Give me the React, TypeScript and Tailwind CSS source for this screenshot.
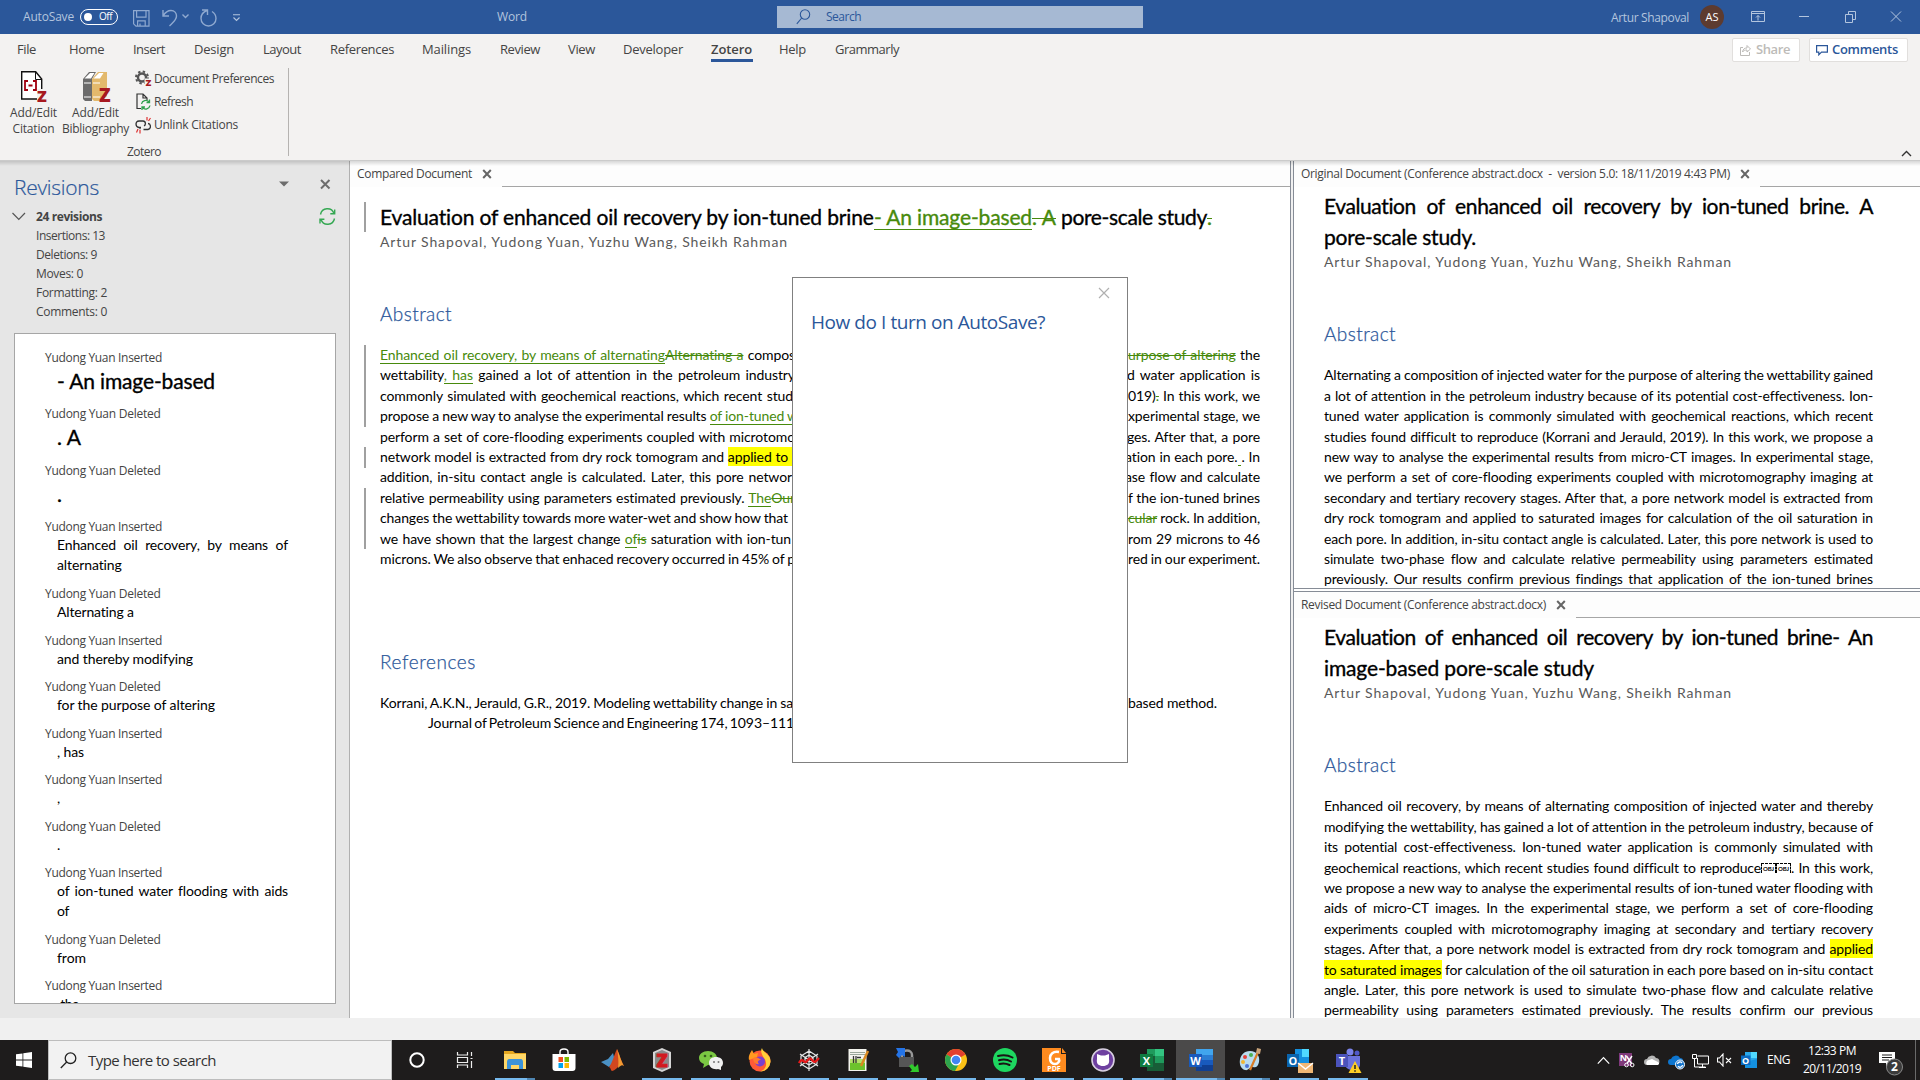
import { useLayoutEffect, useRef } from "react";
import type { ReactNode } from "react";

const UI = "font-['Open_Sans','Noto_Sans',sans-serif]";
const DOC = "font-['Lato','Open_Sans',sans-serif]";
const TITLE = "text-[21px] [-webkit-text-stroke:0.35px_currentColor]";
const HEADING = "text-[19px] font-light leading-[26px] text-[#2b579a] [-webkit-text-stroke:0.25px_currentColor]";

type FitProps = { w: number; mode?: "letter" | "word"; className?: string; children: ReactNode };

/** A single line of text whose letter or word spacing is adjusted to fill `w` pixels. */
function Fit({ w, mode = "letter", className = "", children }: FitProps) {
  const ref = useRef<HTMLSpanElement>(null);
  useLayoutEffect(() => {
    const el = ref.current;
    if (!el) return;
    el.style.letterSpacing = "";
    el.style.wordSpacing = "";
    const text = el.textContent ?? "";
    const spaces = text.split(" ").length - 1;
    const extra = w - el.getBoundingClientRect().width;
    if (mode === "word" && spaces > 0) el.style.wordSpacing = `${extra / spaces}px`;
    else el.style.letterSpacing = `${extra / Math.max(1, text.length)}px`;
  }, [w, mode, children]);
  return (
    <span className={`block shrink-0 ${className}`} style={{ width: w }}>
      <span ref={ref} className="inline-block whitespace-pre">
        {children}
      </span>
    </span>
  );
}

const Ins = ({ children }: { children: ReactNode }) => (
  <span className="border-b border-[#478a0c] pb-0 text-[#478a0c]">{children}</span>
);
const Del = ({ children }: { children: ReactNode }) => (
  <span className="text-[#478a0c] line-through decoration-1">{children}</span>
);
const Mark = ({ children }: { children: ReactNode }) => <span className="bg-[#ffff00] py-px">{children}</span>;

/* ---------- Title bar ---------- */

function TitleBar() {
  return (
    <header className="flex h-[34px] items-center bg-[#2b579a] text-xs text-[#b3c5de]">
      <Fit w={51} className="ml-[23px]">AutoSave</Fit>
      <span className="ml-[6px] flex h-4 w-[38px] items-center rounded-full border-[1.5px] border-white pl-[3px] text-[10px] text-white">
        <i className="mr-[7px] block h-2 w-2 rounded-full bg-white" />
        <Fit w={13}>Off</Fit>
      </span>
      <svg className="ml-[15px] mt-[2px]" width="17" height="17" viewBox="0 0 17 17" fill="none" stroke="#8fa9d0" strokeWidth="1.2">
        <path d="M.6.6h15.400v15.600H3L.6 13.800zM3.600.6v6.600h9.400V.6M4.600 16.200v-5.400h7.600v5.400M7 16v-2.400" />
      </svg>
      <svg className="ml-[12px] mt-[1px]" width="28" height="18" viewBox="0 0 28 18" fill="none" stroke="#8fa9d0" strokeWidth="1.4">
        <path d="M1 1v6h6M1.300 6.700C4 2 7 1.500 9 1.500c3.500 0 5.500 2.500 5.500 5.500 0 4-3.500 6.500-7 10" />
        <path d="M20.500 5.500l3 3 3-3" />
      </svg>
      <svg className="ml-[10px] mt-[1px]" width="18" height="18" viewBox="0 0 18 18" fill="none" stroke="#8fa9d0" strokeWidth="1.4">
        <path d="M2 1h5.500v5M7 1.500C3 3 1 6 1 9.500a7.500 7.500 0 0 0 15 0c0-3-1.500-5.500-4-7" />
      </svg>
      <svg className="ml-[14px] mt-[1px]" width="9" height="8" viewBox="0 0 9 8" fill="none" stroke="#b3c5de" strokeWidth="1.1">
        <path d="M1 .8h7M1.500 3.500l3 3 3-3" />
      </svg>
      <Fit w={30} className="-mt-px ml-[256px]">Word</Fit>
      <div className="ml-[250px] flex h-[22px] w-[366px] items-center bg-[#a6b9d3] text-[#2b579a]">
        <svg className="ml-[19px]" width="15" height="16" viewBox="0 0 15 16" fill="none" stroke="#2b579a" strokeWidth="1.1">
          <circle cx="9" cy="5.500" r="4.700" />
          <path d="M5.700 9L.8 14.800" />
        </svg>
        <Fit w={35} className="ml-[15px]">Search</Fit>
      </div>
      <Fit w={78} className="ml-[468px] mt-px">Artur Shapoval</Fit>
      <span className="ml-[11px] flex h-6 w-6 items-center justify-center rounded-full bg-[#5d3b30] text-[11px] text-white">
        <Fit w={13}>AS</Fit>
      </span>
      <svg className="-mt-px ml-[27px]" width="151" height="12" viewBox="0 0 151 12" fill="none" stroke="#b3c5de">
        <path d="M.5.500h13v10H.5zM.5 2.500h13M7 9.500V4.500M5 6.500l2-2 2 2M48 5.500h10M94.500 3.500h7v8h-7zM97.500 3.500V.5h7v8h-3M140 .5l10 10M150 .5l-10 10" />
      </svg>
    </header>
  );
}

/* ---------- Ribbon ---------- */

// Label, width of the label, and distance from its start to the next label's start.
const TABS: [string, number, number][] = [
  ["File", 19, 52], ["Home", 35, 64], ["Insert", 32, 61], ["Design", 40, 69], ["Layout", 38, 67],
  ["References", 64, 92], ["Mailings", 49, 78], ["Review", 40, 68], ["View", 27, 55], ["Developer", 60, 88],
  ["Zotero", 41, 68], ["Help", 27, 56], ["Grammarly", 64, 64],
];

function TabRow() {
  return (
    <nav className="flex h-8 items-center text-[13px] text-[#444]">
      <div className="ml-[17px] flex">
        {TABS.map(([name, w, pitch]) => (
          <span key={name} className={name === "Zotero" ? "relative font-semibold" : ""} style={{ width: pitch }}>
            <Fit w={w}>{name}</Fit>
            {name === "Zotero" && <i className="absolute -bottom-[2px] left-0 h-[3px] w-[42px] bg-[#2b579a]" />}
          </span>
        ))}
      </div>
      <div className="ml-auto mr-[12px] flex gap-[9px] font-semibold">
        <button className="flex h-[24px] w-[68px] items-center rounded-[2px] border border-[#e1dfdd] bg-white pl-[7px] text-[#bdbbb8]">
          <svg className="mr-[5px]" width="11" height="13" viewBox="0 0 11 13" fill="none" stroke="#bdbbb8">
            <path d="M3 3.500H.5v8h9V8M2.500 8c.5-3 2-4 4.500-4V1.500l3.500 3.500L7 8V6C5 6 3.500 6.500 2.500 8z" />
          </svg>
          <Fit w={34}>Share</Fit>
        </button>
        <button className="flex h-[24px] w-[99px] items-center rounded-[2px] border border-[#e1dfdd] bg-white pl-[6px] text-[#2b579a]">
          <svg className="mr-[4px]" width="12" height="12" viewBox="0 0 12 12" fill="none" stroke="#2b579a" strokeWidth="1.2">
            <path d="M.6 1.600h10.800v6.500H5.500L2.800 10.800V8.100H.6z" />
          </svg>
          <Fit w={66}>Comments</Fit>
        </button>
      </div>
    </nav>
  );
}

const Z = ({ x, y, size }: { x: number; y: number; size: number }) => (
  <text x={x} y={y} fontSize={size} fontWeight="800" fill="#a71920" fontFamily="Open Sans">Z</text>
);

function RibbonBody() {
  return (
    <div className="flex h-[94px] text-xs leading-4 text-[#444]">
      <div className="ml-[10px] flex w-[47px] flex-col items-center pt-[4px]">
        <svg className="overflow-visible" width="25" height="34" viewBox="0 0 25 34">
          <path d="M.7 1.700h14l6 7.300v20H.7z" fill="#fff" stroke="#111" strokeWidth="1.4" />
          <path d="M14.500 2v7.500h6" fill="none" stroke="#111" />
          <path d="M7 11H4v9h3M12 11h3v9h-3M7.500 15.500h4" fill="none" stroke="#a00010" strokeWidth="1.8" />
          <path d="M16 19h9v14h-9z" fill="#f3f2f1" />
          <Z x={16} y={31.5} size={16} />
        </svg>
        <Fit w={47} className="mt-[1px]">Add/Edit</Fit>
        <Fit w={42}>Citation</Fit>
      </div>
      <div className="ml-[5px] flex w-[67px] flex-col items-center pt-[4px]">
        <svg className="overflow-visible" width="28" height="34" viewBox="0 0 28 34">
          <path d="M1 9l6-7h7l-4 7v22H3l-2-2z" fill="#6b6b6b" />
          <path d="M2.500 8.500L8 3h4.500L9 8.500z" fill="#fff" />
          <path d="M10 9l6-7h9v24l-6 5h-7l-2-2z" fill="#e3b96c" />
          <path d="M11.500 8.500L17 3h4.500L18 8.500z" fill="#fff" />
          <path d="M2 13h7M2 27h7M11 13h7M11 27h7" stroke="#fff" />
          <Z x={17} y={31.5} size={19} />
        </svg>
        <Fit w={47} className="mt-[1px]">Add/Edit</Fit>
        <Fit w={67}>Bibliography</Fit>
      </div>
      <div className="ml-[6px] flex flex-col">
        <div className="mt-[1px] flex h-[23px] items-center">
          <svg className="mr-[3px] overflow-visible" width="16" height="17" viewBox="0 0 16 17">
            <circle cx="7" cy="7.500" r="4" fill="none" stroke="#555" strokeWidth="2.4" />
            <circle cx="7" cy="7.500" r="6" fill="none" stroke="#555" strokeWidth="2" strokeDasharray="2.4 2.31" />
            <path d="M9.500 8.500h6.500v8.500H9.500z" fill="#f3f2f1" />
            <Z x={10.5} y={16} size={9.5} />
          </svg>
          <Fit w={120}>Document Preferences</Fit>
        </div>
        <div className="flex h-[23px] items-center">
          <svg className="mr-[3px]" width="16" height="17" viewBox="0 0 16 17" fill="none">
            <path d="M6 15.500H2V1h6l4 4v2M8 1v4h4" stroke="#333" strokeWidth="1.2" />
            <path d="M6.500 11a4.300 4.300 0 0 1 7.500-2M15 12.500a4.300 4.300 0 0 1-7.500 2M14.500 6.500v3h-3M7 17v-3h3" stroke="#2e9f4a" strokeWidth="1.3" />
          </svg>
          <Fit w={39}>Refresh</Fit>
        </div>
        <div className="flex h-[23px] items-center">
          <svg className="mr-[3px]" width="16" height="18" viewBox="0 0 16 18" fill="none">
            <path d="M5.500 12.500H4.500M6 11.500H4C0 11 0 5 4 5h4c3 0 3 4 1 5M8.500 13.500H13c3.500-.5 3-6 0-6" stroke="#333" strokeWidth="1.3" />
            <path d="M12 1v3.500M15.500 2l-2 3M3 13l-1.500 3.500M5 14v3.500" stroke="#d33" strokeWidth="1.2" />
          </svg>
          <Fit w={84}>Unlink Citations</Fit>
        </div>
        <Fit w={34} className="-ml-[8px] mt-[8px]">Zotero</Fit>
      </div>
      <i className="ml-[14px] mt-[2px] h-[88px] w-px bg-[#b5b3b1]" />
      <svg className="mb-[3px] ml-auto mr-[8px] self-end" width="11" height="7" viewBox="0 0 11 7" fill="none" stroke="#333" strokeWidth="1.4">
        <path d="M1 6l4.500-4.500L10 6" />
      </svg>
    </div>
  );
}

/* ---------- Revisions pane ---------- */

type Revision = { kind: "Inserted" | "Deleted"; h: number; lines: [string, number][]; big?: boolean };

const REVISIONS: Revision[] = [
  { kind: "Inserted", h: 56, lines: [["- An image-based", 158]], big: true },
  { kind: "Deleted", h: 57, lines: [[". A", 24]], big: true },
  { kind: "Deleted", h: 56, lines: [[".", 5]], big: true },
  { kind: "Inserted", h: 67, lines: [["Enhanced oil recovery, by means of", 231], ["alternating", 65]] },
  { kind: "Deleted", h: 47, lines: [["Alternating a", 77]] },
  { kind: "Inserted", h: 46, lines: [["and thereby modifying", 136]] },
  { kind: "Deleted", h: 47, lines: [["for the purpose of altering", 158]] },
  { kind: "Inserted", h: 46, lines: [[", has", 27]] },
  { kind: "Inserted", h: 47, lines: [[",", 4]] },
  { kind: "Deleted", h: 46, lines: [[".", 4]] },
  { kind: "Inserted", h: 67, lines: [["of ion-tuned water flooding with aids", 231], ["of", 12]] },
  { kind: "Deleted", h: 46, lines: [["from", 29]] },
  { kind: "Inserted", h: 47, lines: [[" the", 22]] },
];

const COUNTS: [string, number][] = [
  ["Insertions: 13", 69], ["Deletions: 9", 61], ["Moves: 0", 47], ["Formatting: 2", 71], ["Comments: 0", 71],
];

function RevisionsPane() {
  return (
    <aside className="flex w-[350px] shrink-0 flex-col border-r border-[#b0b0b0] bg-[#e6e6e6] text-[#444]">
      <div className="flex h-[42px] items-start pl-[14px] pt-[11px] text-[#2b579a]">
        <Fit w={85} className="text-[21px] font-light leading-[30px] [-webkit-text-stroke:0.2px_currentColor]">Revisions</Fit>
        <svg className="ml-[179px] mt-[7px]" width="54" height="12" viewBox="0 0 54 12">
          <path d="M1 2.500h10L6 7.500z" fill="#6d6d6d" />
          <path d="M43 1l8.500 8.500M51.500 1L43 9.500" stroke="#6d6d6d" strokeWidth="2" />
        </svg>
      </div>
      <div className="flex h-[130px] pl-[12px] pt-[4px]">
        <svg className="mt-[5px]" width="14" height="9" viewBox="0 0 14 9" fill="none" stroke="#555" strokeWidth="1.2">
          <path d="M.5 1l6.300 6.500L13 1" />
        </svg>
        <div className="ml-[10px] w-[284px] text-xs leading-[19px]">
          <Fit w={66} className="font-bold">24 revisions</Fit>
          {COUNTS.map(([t, w]) => (
            <Fit key={t} w={w}>{t}</Fit>
          ))}
        </div>
        <svg className="-ml-px mt-px" width="17" height="17" viewBox="0 0 17 17" fill="none" stroke="#35a853" strokeWidth="1.4">
          <path d="M1.500 6.500A7 7 0 0 1 15 5.500M15.500 10.500A7 7 0 0 1 2 11.500M15.700 1.500v4.300h-4.400M1 15.500v-4.300h4.400" />
        </svg>
      </div>
      <div className="ml-[14px] h-[671px] w-[322px] overflow-hidden border border-[#a6a6a6] bg-white pl-[30px] pt-[14px]">
        {REVISIONS.map((r, i) => (
          <div key={i} style={{ height: r.h }}>
            <Fit w={r.kind === "Inserted" ? 117 : 115.5} className="text-xs leading-5">{`Yudong Yuan ${r.kind}`}</Fit>
            <div className={`ml-[12px] text-black ${DOC} ${r.big ? `${TITLE} -mt-[2px] leading-[29px]` : "-mt-[2px] text-[14px] leading-5"}`}>
              {r.lines.map(([t, w]) => (
                <Fit key={t} w={w} mode={w === 231 ? "word" : "letter"} className={w === 231 ? "tracking-[-0.15px]" : ""}>{t}</Fit>
              ))}
            </div>
          </div>
        ))}
      </div>
    </aside>
  );
}

/* ---------- Document panes ---------- */

function PaneTab({ title, w }: { title: string; w: number }) {
  return (
    <div className="flex h-[26px] shrink-0 bg-[#fdfdfd]">
      <div className="flex w-fit items-center pl-[7px] pr-[10px] text-xs text-[#444]">
        <Fit w={w}>{title}</Fit>
        <svg className="ml-[10px]" width="10" height="10" viewBox="0 0 10 10" stroke="#666" strokeWidth="2">
          <path d="M1.200 1l7.600 8M8.800 1L1.200 9" />
        </svg>
      </div>
      <i className="h-full flex-1 border-b border-[#a6a6a6]" />
    </div>
  );
}

const Authors = () => (
  <Fit w={408} className="text-[14px] text-[#5a5a5a]">Artur Shapoval, Yudong Yuan, Yuzhu Wang, Sheikh Rahman</Fit>
);

const COMPARED: [ReactNode, number, ReactNode, number][] = [
  [<><Ins>Enhanced oil recovery, by means of alternating</Ins><Del>Alternating a</Del> compos</>, 415, <><Del>urpose of altering</Del> the</>, 132],
  [<>wettability<Ins>, has</Ins> gained a lot of attention in the petroleum industry</>, 415, "d water application is", 133],
  ["commonly simulated with geochemical reactions, which recent stud", 413, <>019)<Del>.</Del> In this work, we</>, 132],
  [<>propose a new way to analyse the experimental results <Ins>of ion-tuned w</Ins></>, 418, "xperimental stage, we", 132],
  ["perform a set of core-flooding experiments coupled with microtomo", 415, "ges. After that, a pore", 133],
  [<>network model is extracted from dry rock tomogram and <Mark>applied to </Mark></>, 412, <>ation in each pore.<Ins> </Ins>. In</>, 135],
  ["addition, in-situ contact angle is calculated. Later, this pore networ", 412, "ase flow and calculate", 135],
  [<>relative permeability using parameters estimated previously. <Ins>The</Ins><Del>Our</Del></>, 415, "f the ion-tuned brines", 132],
  ["changes the wettability towards more water-wet and show how that", 408, <><Del>cular</Del> rock. In addition,</>, 132],
  [<>we have shown that the largest change <Ins>of</Ins><Del>is</Del> saturation with ion-tun</>, 411, "rom 29 microns to 46", 132],
  ["microns. We also observe that enhaced recovery occurred in 45% of p", 415, "red in our experiment.", 132],
];

function ComparedPane() {
  return (
    <section className="flex w-[940px] shrink-0 flex-col bg-white">
      <PaneTab title="Compared Document" w={115} />
      <div className={`flex text-black ${DOC}`}>
        <div className="ml-[14px] mr-[14px] flex w-[2px] flex-col pt-[15px]">
          <i className="h-[30px] bg-[#a0a0a0]" />
          <i className="mt-[113px] h-[82px] bg-[#a0a0a0]" />
          <i className="mt-[20px] h-[21px] bg-[#a0a0a0]" />
          <i className="mt-[20px] h-[61px] bg-[#a0a0a0]" />
        </div>
        <div className="w-[880px] pt-[15px]">
          <h1 className={`flex leading-[30px] ${TITLE}`}>
            <Fit w={494}>Evaluation of enhanced oil recovery by ion-tuned brine</Fit>
            <Fit w={158} className="text-[#478a0c]">
              <span className="underline decoration-1 underline-offset-[4px] [text-decoration-skip-ink:none]">- An image-based</span>
            </Fit>
            <Fit w={24}><Del>. A</Del></Fit>
            <Fit w={151}> pore-scale study</Fit>
            <Fit w={5}><Del>.</Del></Fit>
          </h1>
          <div className="leading-[19px]"><Authors /></div>
          <Fit w={72} className={`mt-[50px] ${HEADING}`}>Abstract</Fit>
          <div className="mt-[18px] text-[14px] leading-[20.4px] tracking-[-0.1px]">
            {COMPARED.map(([left, lw, right, rw], i) => (
              <div key={i} className="flex justify-between">
                <Fit w={lw} mode="word">{left}</Fit>
                <Fit w={rw} mode="word">{right}</Fit>
              </div>
            ))}
          </div>
          <Fit w={96} className={`mt-[80px] ${HEADING}`}>References</Fit>
          <div className="mt-[18px] text-[14px] leading-[19.5px] tracking-[-0.1px]">
            <div className="flex">
              <Fit w={413} mode="word">Korrani, A.K.N., Jerauld, G.R., 2019. Modeling wettability change in sa</Fit>
              <Fit w={89} mode="word" className="ml-[335px]">based method.</Fit>
            </div>
            <Fit w={366} mode="word" className="ml-[48px]">Journal of Petroleum Science and Engineering 174, 1093–111</Fit>
          </div>
        </div>
      </div>
    </section>
  );
}

type SideProps = {
  tab: string; tabW: number; title: ReactNode; title2: string; title2W: number; lines: ReactNode[];
};

function SideDoc({ tab, tabW, title, title2, title2W, lines }: SideProps) {
  return (
    <section className="flex min-h-0 flex-1 flex-col overflow-hidden bg-white">
      <PaneTab title={tab} w={tabW} />
      <div className={`ml-[30px] w-[549px] pt-[3px] text-black ${DOC}`}>
        <h1 className={`leading-[31.2px] ${TITLE}`}>
          <Fit w={549} mode="word" className="tracking-[-0.4px]">{title}</Fit>
          <Fit w={title2W}>{title2}</Fit>
        </h1>
        <div className="leading-[19px]"><Authors /></div>
        <Fit w={72} className={`mt-[50px] ${HEADING}`}>Abstract</Fit>
        <div className="mt-[18px] text-[14px] leading-[20.4px] tracking-[-0.15px]">
          {lines.map((l, i) => (
            <Fit key={i} w={549} mode="word">{l}</Fit>
          ))}
        </div>
      </div>
    </section>
  );
}

const Obj = () => (
  <span className="relative -top-[2px] inline-block h-[10px] w-[15px] border-x border-t border-dashed border-black text-center align-baseline text-[6px] font-bold leading-[9px] tracking-[-0.2px]">OBJ</span>
);

const ORIGINAL: ReactNode[] = [
  "Alternating a composition of injected water for the purpose of altering the wettability gained",
  "a lot of attention in the petroleum industry because of its potential cost-effectiveness. Ion-",
  "tuned water application is commonly simulated with geochemical reactions, which recent",
  "studies found difficult to reproduce (Korrani and Jerauld, 2019). In this work, we propose a",
  "new way to analyse the experimental results from micro-CT images. In experimental stage,",
  "we perform a set of core-flooding experiments coupled with microtomography imaging at",
  "secondary and tertiary recovery stages. After that, a pore network model is extracted from",
  "dry rock tomogram and applied to saturated images for calculation of the oil saturation in",
  "each pore. In addition, in-situ contact angle is calculated. Later, this pore network is used to",
  "simulate two-phase flow and calculate relative permeability using parameters estimated",
  "previously. Our results confirm previous findings that application of the ion-tuned brines",
];

const REVISED: ReactNode[] = [
  "Enhanced oil recovery, by means of alternating composition of injected water and thereby",
  "modifying the wettability, has gained a lot of attention in the petroleum industry, because of",
  "its potential cost-effectiveness. Ion-tuned water application is commonly simulated with",
  <>geochemical reactions, which recent studies found difficult to reproduce<Obj /><Obj />. In this work,</>,
  "we propose a new way to analyse the experimental results of ion-tuned water flooding with",
  "aids of micro-CT images. In the experimental stage, we perform a set of core-flooding",
  "experiments coupled with microtomography imaging at secondary and tertiary recovery",
  <>stages. After that, a pore network model is extracted from dry rock tomogram and <Mark>applied</Mark></>,
  <><Mark>to saturated images</Mark> for calculation of the oil saturation in each pore based on in-situ contact</>,
  "angle. Later, this pore network is used to simulate two-phase flow and calculate relative",
  "permeability using parameters estimated previously. The results confirm our previous",
];

function AutoSaveDialog() {
  return (
    <div className="absolute left-[792px] top-[277px] h-[486px] w-[336px] border border-[#808080] bg-white">
      <svg className="ml-auto mr-[17px] mt-[9px]" width="12" height="12" viewBox="0 0 12 12" stroke="#b0b0b0" strokeWidth="1.2">
        <path d="M1 1l10 10M11 1L1 11" />
      </svg>
      <Fit w={234} className="ml-[18px] mt-[9px] text-[19px] leading-[28px] text-[#2b579a]">How do I turn on AutoSave?</Fit>
    </div>
  );
}

/* ---------- Taskbar ---------- */

const Letter = ({ x, y, s = 11, children }: { x: number; y: number; s?: number; children: string }) => (
  <text x={x} y={y} fontSize={s} fontWeight="700" fill="#fff" textAnchor="middle" fontFamily="Open Sans">{children}</text>
);

const APPS: { name: string; run?: "one" | "many" | "active"; art: ReactNode }[] = [
  { name: "Cortana", art: <circle cx="12" cy="12" r="6.700" fill="none" stroke="#fff" strokeWidth="2" /> },
  { name: "Task view", art: <path d="M3.500 4v3h10V4M3.500 20v-3h10v3M3.500 9.500h10v5h-10zM17.500 4v4M17.500 13v7M16.500 10.500h2" fill="none" stroke="#eee" strokeWidth="1.2" /> },
  { name: "File Explorer", run: "many", art: <><path d="M1 3h9l2 2h11v16H1z" fill="#e5a720" /><path d="M1 6h22v15H1z" fill="#ffd767" /><path d="M4 21v-7c0-2 1-3 2-3h12c1 0 2 1 2 3v7h-4v-4H8v4z" fill="#3c93d9" /></> },
  { name: "Store", art: <><path d="M8 6V4c0-4 8-4 8 0v2" fill="none" stroke="#fff" strokeWidth="1.4" /><path d="M.5 6h23v14a3 3 0 0 1-3 3h-17a3 3 0 0 1-3-3z" fill="#fff" /><path d="M6.500 9H11v5H6.500z" fill="#f25022" /><path d="M12.500 9H17v5h-4.500z" fill="#7fba00" /><path d="M6.500 15H11v5H6.500z" fill="#00a4ef" /><path d="M12.500 15H17v5h-4.500z" fill="#ffb900" /></> },
  { name: "MATLAB", art: <><path d="M0 14l7-3 5-6 2 8-6 6z" fill="#4a90c4" /><path d="M8 19c3-3 5-12 8-18 2 4 4 12 7 17-3-3-5 0-7 2s-4 3-5 3-1-3-3-4z" fill="#d1471f" /><path d="M16 1c1 6 2 12 1 19 2-2 4-4 6-2-3-5-5-13-7-17z" fill="#f39a32" /></> },
  { name: "Zotero", run: "one", art: <><path d="M12 0l9 4v16l-9 4-9-4V4z" fill="#d5d5d5" /><path d="M12 2l7 3v14l-7 3-7-3V5z" fill="#8a8a8a" /><text x="12" y="18.500" fontSize="18" fontWeight="800" fill="#d11a1f" stroke="#d11a1f" textAnchor="middle" fontFamily="Open Sans">Z</text></> },
  { name: "WeChat", run: "one", art: <><path d="M9 3c5 0 9 3 9 7s-4 7-9 7l-5 3 1-4c-3-1-5-3-5-6 0-4 4-7 9-7z" fill="#7bc843" /><circle cx="6" cy="8" r="1.300" fill="#345c1c" /><circle cx="12" cy="8" r="1.300" fill="#345c1c" /><path d="M17 9c4 0 7 2 7 6 0 2-1 3-2 4v3l-3-1c-5 1-9-2-9-6s3-6 7-6z" fill="#f1f1f1" /><circle cx="15" cy="14" r="1" fill="#777" /><circle cx="19.500" cy="14" r="1" fill="#777" /></> },
  { name: "Firefox", run: "one", art: <><circle cx="12" cy="13" r="10.500" fill="#ff5a36" /><path d="M14 0c1 5 9 6 8.500 14A10.500 10.500 0 0 1 12 23.500c7-2 8-9 3-15-1-3-3-5-1-8.500z" fill="#ffcf3a" /><path d="M1 12C0 7 3 4 4 2l2 4 4-1-1 4z" fill="#ff9a1f" /><circle cx="12" cy="13.500" r="5" fill="#7a3fd0" /><path d="M5 10c4-1 6 0 8 2-3 0-4 2-2 4-3 1-6-2-6-6z" fill="#ff7a2d" /></> },
  { name: "Spyder", run: "one", art: <><path d="M12 1v22M3 6l18 12M21 6L3 18M12 3L4 8v8l8 5 8-5V8zM12 7L8 9.500v5l4 2.500 4-2.500v-5z" fill="none" stroke="#e6e6e6" strokeWidth="1.2" /><path d="M2 15c3-6 5 0 7-1s3-6 6-2 4 1 7-2" fill="none" stroke="#e61919" strokeWidth="2.4" /></> },
  { name: "Notepad++", run: "one", art: <><path d="M2.500 1h18v22h-18z" fill="#f4f4ee" /><path d="M4 14h15v8H4z" fill="#6cc22c" /><path d="M4 11h15v4H4z" fill="#b5e06c" /><path d="M4 4.500h15M4 6.500h15" stroke="#9aa79a" /><path d="M7.500 8v7M10 8v7M11 9.500h4" stroke="#333" strokeWidth="1.3" /><path d="M22 3l-7 15" stroke="#d98a20" strokeWidth="2.5" /></> },
  { name: "WinSCP", run: "one", art: <><path d="M7 10V7c0-6 10-6 10 0v3" fill="none" stroke="#999" strokeWidth="2.5" /><path d="M4 9h15v10H4z" fill="#565656" /><path d="M1 0h9v9L7 7l-3 3-3-3 2-3z" fill="#2474e8" /><path d="M24 24h-9l2-2-3-4 3-2 3 3 3-3z" fill="#30c92c" /></> },
  { name: "Chrome", run: "one", art: <><circle cx="12" cy="12" r="11" fill="#fbc116" /><path d="M12 12L2.500 6.500A11 11 0 0 1 21.500 6.500z" fill="#e2402f" /><path d="M12 12L2.500 6.500A11 11 0 0 0 11 23l5-9z" fill="#2da44e" /><circle cx="12" cy="12" r="5.500" fill="#fff" /><circle cx="12" cy="12" r="4.300" fill="#4285f4" /></> },
  { name: "Spotify", run: "one", art: <><circle cx="12" cy="12" r="12" fill="#1ed760" /><path d="M5 8c5-1.500 10-1 14.500 1.500M6 12.300c4-1.200 8.500-.8 12 1.200M6.500 16c4-1 7-.5 10 1" fill="none" stroke="#191414" strokeWidth="2" strokeLinecap="round" /></> },
  { name: "Foxit PDF", run: "one", art: <><path d="M0 0h19v6h5v18H0z" fill="#ff8b1f" /><path d="M20 0l4 5h-4z" fill="#ff8b1f" /><path d="M17 4c-6-1-9 2-9 6 0 4 2 6 5 6s5-3 4-5h-4" fill="none" stroke="#fff" strokeWidth="2.5" /><Letter x={12} y={23} s={7}>PDF</Letter></> },
  { name: "GitHub", run: "one", art: <><circle cx="12" cy="12" r="11" fill="#6e40a0" stroke="#d8d0e0" strokeWidth="1.6" /><path d="M6 6l4 1.500h4L18 6v5c1 5-2 7-6 7s-7-2-6-7z" fill="#fff" /></> },
  { name: "Excel", run: "many", art: <><path d="M7 1h17v22H7z" fill="#1f9a5c" /><path d="M15 1h9v7h-9z" fill="#33c481" /><path d="M7 8h8v8H7zM15 15h9v8H7v-8z" fill="#185c37" /><path d="M0 6h13v13H0z" fill="#107c41" /><Letter x={6.5} y={16.5}>X</Letter></> },
  { name: "Word", run: "active", art: <><path d="M7 1h17v22H7z" fill="#2b7cd3" /><path d="M7 1h17v6H7z" fill="#41a5ee" /><path d="M7 12h17v6H7z" fill="#185abd" /><path d="M7 17h17v6H7z" fill="#103f91" /><path d="M0 6h13v13H0z" fill="#185abd" /><Letter x={6.5} y={16.5}>W</Letter></> },
  { name: "Paint", run: "many", art: <><path d="M12 3c7 0 10 5 9 11-1 5-4 6-6 5-3-1-4 4-8 3-8-2-7-19 5-19z" fill="#b9dcf0" /><circle cx="7" cy="9" r="2" fill="#e6413a" /><circle cx="13" cy="7" r="2" fill="#4bb052" /><circle cx="5" cy="14" r="2" fill="#f2b632" /><circle cx="9" cy="18" r="2" fill="#4a74d8" /><path d="M21 2l-9 20" stroke="#d97d28" strokeWidth="2.2" /><path d="M19 0l4 1-1 5-4-1z" fill="#c9a37a" /></> },
  { name: "Outlook", run: "one", art: <><path d="M8 1h14v18H8z" fill="#1490df" /><path d="M15 1h7v8h-7z" fill="#50d9ff" /><path d="M0 6h12v13H0z" fill="#0a64ad" /><Letter x={6} y={16.5}>O</Letter><path d="M11 15h15v10H11z" fill="#f0b775" /><path d="M11 15l7.500 6 7.500-6" fill="none" stroke="#fff" strokeWidth="1.4" /></> },
  { name: "Teams", run: "one", art: <><circle cx="14" cy="4" r="3.500" fill="#7b83eb" /><circle cx="21" cy="5" r="2.500" fill="#5059c9" /><path d="M9 8h15v8c0 4-3 6-7 6s-8-2-8-6z" fill="#6a72dd" /><path d="M0 6h12v13H0z" fill="#4b53bc" /><Letter x={6} y={16.5}>T</Letter><path d="M19 13l6.500 12h-13z" fill="#ffcf24" /><path d="M19 17v4M19 22.300v1.400" stroke="#222" strokeWidth="1.5" /></> },
];

function Tray() {
  return (
    <div className="ml-auto flex items-center text-xs text-white">
      <svg width="13" height="9" viewBox="0 0 13 9" fill="none" stroke="#fff" strokeWidth="1.2"><path d="M.8 7.700l5.700-6 5.700 6" /></svg>
      <svg className="ml-[9px]" width="16" height="16" viewBox="0 0 16 16">
        <path d="M0 1h13v13H0z" fill="#80397b" /><Letter x={4.5} y={9} s={9}>N</Letter>
        <path d="M7.500 4l5 7.500M13 4l-5 7.500" stroke="#fff" strokeWidth="1.4" /><circle cx="7.500" cy="13" r="1.800" fill="none" stroke="#fff" /><circle cx="13.200" cy="13" r="1.800" fill="none" stroke="#fff" />
      </svg>
      <svg className="ml-[9px]" width="16" height="12" viewBox="0 0 16 12"><path d="M3 11a3 3 0 0 1 0-6 5 5 0 0 1 9-1 3.600 3.600 0 0 1 1 7z" fill="#b5b5b5" /><path d="M3 11a3 3 0 0 1 2-5l3-1 6 3c2 1 1 3-1 3z" fill="#fff" /></svg>
      <svg className="ml-[8px] mt-[4px]" width="17" height="16" viewBox="0 0 17 16"><path d="M3 11a3 3 0 0 1 0-6 5 5 0 0 1 9-1 3.600 3.600 0 0 1 1 7z" fill="#0d75cf" /><circle cx="12" cy="10.500" r="4.500" fill="#1473cc" stroke="#fff" /><path d="M9.500 10a2.500 2.500 0 0 1 4.500-1M14.500 11a2.500 2.500 0 0 1-4.500 1.200" fill="none" stroke="#fff" strokeWidth="1.3" /></svg>
      <svg className="ml-[7px] mt-[2px]" width="17" height="15" viewBox="0 0 17 15" fill="none" stroke="#fff"><path d="M5.500 2h11v8h-11M5.500 4v6M.5.500h4v4h-4zM2.500 4.500v8.500h11M10.500 10v3M7 13.500h7" /></svg>
      <svg className="ml-[8px]" width="15" height="14" viewBox="0 0 15 14" fill="none" stroke="#fff"><path d="M.5 5h2l3.500-4v12L2.500 9h-2zM9 5l5 5M14 5l-5 5" strokeWidth="1.1" /></svg>
      <svg className="ml-[9px]" width="16" height="16" viewBox="0 0 16 16"><path d="M4 0h12v14H4z" fill="#28a8ea" /><path d="M10 0h6v6h-6z" fill="#50d9ff" /><path d="M4 10l12-3v9H4z" fill="#1490df" /><path d="M0 3.500h9.500v9.500H0z" fill="#0a6bc2" /><Letter x={4.7} y={11.5} s={9}>O</Letter></svg>
      <Fit w={23} className="ml-[10px]">ENG</Fit>
      <div className="ml-[13px] flex w-[58px] flex-col items-center leading-[18px]">
        <Fit w={48}>12:33 PM</Fit>
        <Fit w={58}>20/11/2019</Fit>
      </div>
      <svg className="ml-[18px] mt-[6px]" width="25" height="26" viewBox="0 0 25 26">
        <path d="M0 2h16v11h-5l-4 4v-4H0z" fill="#fff" /><path d="M3 5h10M3 7.500h10M3 10h7" stroke="#1e1e1e" />
        <circle cx="15.500" cy="17" r="8" fill="#3b3b3b" stroke="#8a8a8a" /><Letter x={15.5} y={21.3} s={12}>2</Letter>
      </svg>
      <i className="ml-[11px] mr-[4px] h-10 w-px bg-[#6a6a6a]" />
    </div>
  );
}

function Taskbar() {
  return (
    <footer className="flex h-10 bg-[#1e1c1c]">
      <svg className="ml-[16px] mr-[16px] mt-[12px]" width="16" height="16" viewBox="0 0 16 16" fill="#fff">
        <path d="M0 2.300l6.500-.9v6.200H0zM7.300 1.300L16 0v7.600H7.300zM0 8.400h6.500v6.200L0 13.700zM7.300 8.400H16V16l-8.700-1.300z" />
      </svg>
      <div className="flex w-[344px] items-center border border-[#bdbdbd] bg-[#f2f2f2] text-[15px] text-[#333]">
        <svg className="ml-[11px]" width="17" height="17" viewBox="0 0 17 17" fill="none" stroke="#222" strokeWidth="1.3">
          <circle cx="10.500" cy="6.200" r="5.300" /><path d="M6.700 10L.8 16" />
        </svg>
        <Fit w={128} className="ml-[11px]">Type here to search</Fit>
      </div>
      {APPS.map((a) => (
        <div key={a.name} title={a.name} className={`flex w-[49px] flex-col items-center pt-[8px] ${a.run === "active" ? "bg-[#4b4a4a]" : ""}`}>
          <svg width="24" height="24" viewBox="0 0 24 24" className="overflow-visible">{a.art}</svg>
          {a.run && (
            <i className={`mt-[6px] flex h-[2px] ${a.run === "active" ? "w-[49px]" : "w-10"}`}>
              <i className="flex-1 bg-[#76b9ed]" />
              {a.run !== "one" && <i className="w-[8px] bg-[#4f86b3]" />}
            </i>
          )}
        </div>
      ))}
      <Tray />
    </footer>
  );
}

export default function App() {
  return (
    <div className={`relative flex h-[1080px] w-[1920px] flex-col overflow-hidden bg-[#f0f0f0] ${UI}`}>
      <TitleBar />
      <div className="h-[127px] border-b border-[#cbcbcb] bg-[#f3f2f1]">
        <TabRow />
        <RibbonBody />
      </div>
      <main className="relative flex h-[857px] overflow-hidden">
        <RevisionsPane />
        <ComparedPane />
        <div className="flex min-w-0 flex-1 flex-col border-l border-[#868c96] pl-[2px]">
          <div className="flex min-h-0 flex-1 flex-col border-l border-[#868c96]">
            <div className="flex h-[427px] flex-col">
              <SideDoc
                tab="Original Document (Conference abstract.docx  -  version 5.0: 18/11/2019 4:43 PM)"
                tabW={429}
                title="Evaluation of enhanced oil recovery by ion-tuned brine. A"
                title2="pore-scale study."
                title2W={152}
                lines={ORIGINAL}
              />
            </div>
            <div className="h-[4px] shrink-0 border-y border-[#868c96] bg-white" />
            <SideDoc
              tab="Revised Document (Conference abstract.docx)"
              tabW={245}
              title="Evaluation of enhanced oil recovery by ion-tuned brine- An"
              title2="image-based pore-scale study"
              title2W={270}
              lines={REVISED}
            />
          </div>
        </div>
        <i className="absolute inset-x-0 top-0 h-[5px] bg-linear-to-b from-black/15 to-transparent" />
      </main>
      <div className="h-[22px]" />
      <Taskbar />
      <AutoSaveDialog />
    </div>
  );
}
